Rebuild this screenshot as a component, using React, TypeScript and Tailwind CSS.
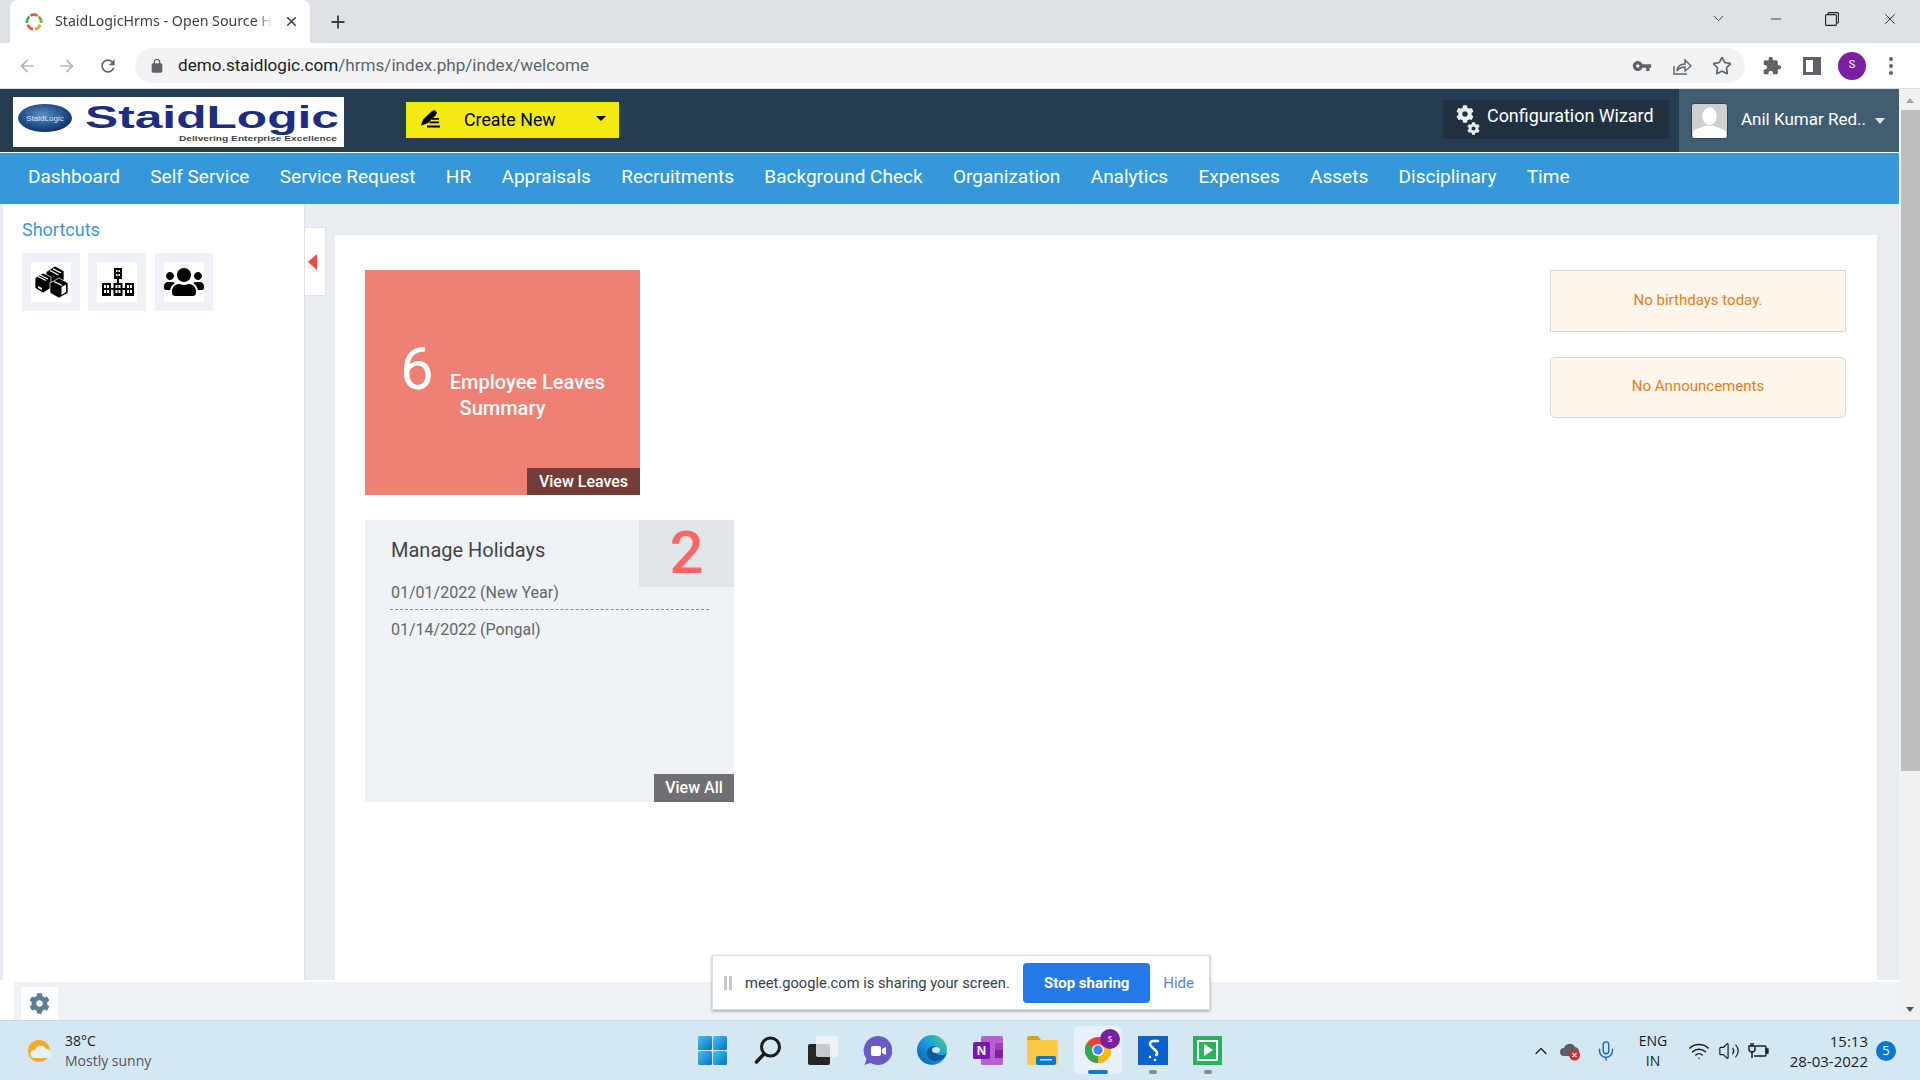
import { ChevronDown, ChevronUp, Mic, Minus, Plus, Star, Volume2, Wifi, X } from "lucide-react"
import { FaCog, FaUsers } from "react-icons/fa"

const navItems = [
  "Dashboard",
  "Self Service",
  "Service Request",
  "HR",
  "Appraisals",
  "Recruitments",
  "Background Check",
  "Organization",
  "Analytics",
  "Expenses",
  "Assets",
  "Disciplinary",
  "Time",
]

const MaterialIcon = ({ d, className }: { d: string; className: string }) => (
  <svg viewBox="0 0 24 24" fill="currentColor" className={className}>
    <path d={d} />
  </svg>
)

const TabStrip = () => (
  <div className="h-[43px] shrink-0 bg-[#dee1e6] flex items-end text-[#3c4043]">
    <div className="ml-[10px] w-[300px] h-[43px] bg-white rounded-t-lg flex items-center pl-[15px]">
      <svg viewBox="0 0 20 20" className="w-[18px] h-[18px] shrink-0" fill="none" strokeWidth="3">
        <path d="M6 3 A8 8 0 0 1 14 3" stroke="#e5574a" />
        <path d="M15 4 A8 8 0 0 1 18 11" stroke="#7cb342" />
        <path d="M17 13 A8 8 0 0 1 11 18" stroke="#e8a33a" />
        <path d="M9 18 A8 8 0 0 1 3 13" stroke="#e5574a" />
        <path d="M2 11 A8 8 0 0 1 5 4" stroke="#4caf50" />
      </svg>
      <div className="ml-[12px] mb-[2px] w-[217px] overflow-hidden whitespace-nowrap text-[14.2px] font-['Noto_Sans',sans-serif] [mask-image:linear-gradient(to_right,black_93%,transparent)]">
        StaidLogicHrms - Open Source H
      </div>
      <X className="ml-[12px] w-[15px] h-[15px] text-[#3c4043]" strokeWidth={2.5} />
    </div>
    <Plus className="ml-[18px] mb-[11px] w-[20px] h-[20px] text-[#3c4043]" strokeWidth={2.2} />
    <div className="ml-auto h-full flex items-center pb-[6px] text-[#222]">
      <ChevronDown className="w-[17px] h-[17px]" strokeWidth={1.2} />
      <Minus className="ml-[41px] w-[16px] h-[16px]" strokeWidth={1.2} />
      <svg viewBox="0 0 14 14" className="ml-[41px] w-[14px] h-[14px]" fill="none" stroke="currentColor" strokeWidth="1.1">
        <rect x="0.6" y="2.6" width="10.8" height="10.8" rx="1" />
        <path d="M3 2.5V1.5A1 1 0 0 1 4 .6H12.4A1 1 0 0 1 13.4 1.6V10A1 1 0 0 1 12.4 11H11.5" />
      </svg>
      <X className="ml-[42px] mr-[21px] w-[18px] h-[18px]" strokeWidth={1.2} />
    </div>
  </div>
)

const Toolbar = () => (
  <div className="h-[46px] shrink-0 bg-white border-b border-[#dadce0] flex items-start pt-[5px]">
    <div className="flex items-center h-[35px] text-[#b4b7bb]">
      <MaterialIcon className="ml-[17px] w-[20px] h-[20px]" d="M20 11H7.83l5.59-5.59L12 4l-8 8 8 8 1.41-1.41L7.83 13H20v-2z" />
      <MaterialIcon className="ml-[20px] w-[20px] h-[20px]" d="M4 11h12.17l-5.59-5.59L12 4l8 8-8 8-1.41-1.41L16.17 13H4v-2z" />
      <MaterialIcon className="ml-[21px] w-[20px] h-[20px] text-[#5f6368]" d="M17.65 6.35C16.2 4.9 14.21 4 12 4c-4.42 0-7.99 3.58-7.99 8s3.57 8 7.99 8c3.73 0 6.84-2.55 7.73-6h-2.08c-.82 2.33-3.04 4-5.65 4-3.31 0-6-2.69-6-6s2.69-6 6-6c1.66 0 3.14.69 4.22 1.78L13 11h7V4l-2.35 2.35z" />
    </div>
    <div className="ml-[17px] w-[1610px] h-[35px] bg-[#f1f3f4] rounded-full flex items-center">
      <MaterialIcon className="ml-[14px] w-[16px] h-[16px] text-[#5f6368]" d="M18 8h-1V6c0-2.76-2.24-5-5-5S7 3.24 7 6v2H6c-1.1 0-2 .9-2 2v10c0 1.1.9 2 2 2h12c1.1 0 2-.9 2-2V10c0-1.1-.9-2-2-2zM9 6c0-1.66 1.34-3 3-3s3 1.34 3 3v2H9V6z" />
      <div className="ml-[13px] text-[17.1px] text-[#202124] font-['Roboto',sans-serif] whitespace-nowrap">
        demo.staidlogic.com<span className="text-[#5f6368]">/hrms/index.php/index/welcome</span>
      </div>
      <div className="ml-auto flex items-center text-[#5f6368] pr-[13px]">
        <MaterialIcon className="w-[20px] h-[20px]" d="M12.65 10C11.83 7.67 9.61 6 7 6c-3.31 0-6 2.69-6 6s2.69 6 6 6c2.61 0 4.83-1.67 5.65-4H17v4h4v-4h2v-4H12.65zM7 14c-1.1 0-2-.9-2-2s.9-2 2-2 2 .9 2 2-.9 2-2 2z" />
        <svg viewBox="0 0 20 20" className="ml-[20px] w-[20px] h-[20px]" fill="none" stroke="currentColor" strokeWidth="1.4">
          <path d="M2 10v8h13" />
          <path d="M5 15c.5-5 4-7 8-7V4l6 6-6 5v-4c-3.500 0-6 1-8 4z" />
        </svg>
        <Star className="ml-[20px] w-[20px] h-[20px]" strokeWidth={2} />
      </div>
    </div>
    <div className="h-[35px] flex items-center text-[#5f6368]">
      <MaterialIcon className="ml-[17px] w-[20px] h-[20px]" d="M20.5 11H19V7c0-1.100-.9-2-2-2h-4V3.500C13 2.120 11.880 1 10.500 1S8 2.120 8 3.500V5H4c-1.100 0-1.990.9-1.990 2v3.800H3.500c1.490 0 2.700 1.210 2.700 2.700s-1.210 2.700-2.700 2.700H2V20c0 1.100.9 2 2 2h3.800v-1.500c0-1.490 1.210-2.700 2.700-2.700 1.490 0 2.700 1.210 2.700 2.700V22H17c1.100 0 2-.9 2-2v-4h1.500c1.380 0 2.500-1.120 2.500-2.500S21.880 11 20.500 11z" />
      <div className="ml-[21px] w-[18px] h-[18px] border-[3px] border-[#5f6368] border-r-[8px]" />
      <div className="ml-[17px] w-[28px] h-[28px] rounded-full bg-[#7b1fa2] text-white text-[11px] flex items-center justify-center font-['Roboto',sans-serif]">
        S
      </div>
      <div className="ml-[23px] flex flex-col gap-[3px]">
        <div className="w-[4px] h-[4px] rounded-full bg-[#5f6368]" />
        <div className="w-[4px] h-[4px] rounded-full bg-[#5f6368]" />
        <div className="w-[4px] h-[4px] rounded-full bg-[#5f6368]" />
      </div>
    </div>
  </div>
)

const Logo = () => (
  <svg viewBox="0 0 331 50" className="w-[331px] h-[50px] bg-white mt-[8px] ml-[13px] shrink-0">
    <defs>
      <radialGradient id="globe" cx="45%" cy="40%" r="65%">
        <stop offset="0%" stopColor="#5c8fc0" />
        <stop offset="60%" stopColor="#24528c" />
        <stop offset="100%" stopColor="#0f2c5c" />
      </radialGradient>
    </defs>
    <ellipse cx="32" cy="21" rx="27" ry="14" fill="url(#globe)" />
    <text x="32" y="24" textAnchor="middle" fontSize="8" fill="#dfe8f2" fontFamily="Liberation Sans">StaidLogic</text>
    <text x="72" y="31" fontSize="32" fontWeight="700" fill="#1f2d80" fontFamily="Liberation Sans" textLength="254" lengthAdjust="spacingAndGlyphs">StaidLogic</text>
    <text x="166" y="44" fontSize="7.500" fontWeight="700" fill="#444" fontFamily="Liberation Sans" textLength="158" lengthAdjust="spacingAndGlyphs">Delivering Enterprise Excellence</text>
  </svg>
)

const Header = () => (
  <div className="h-[64px] shrink-0 bg-[#263c50] border-b border-white flex items-start">
    <Logo />
    <div className="ml-[62px] mt-[13px] w-[213px] h-[36px] bg-[#f2ea10] flex items-center text-black text-[17.8px]">
      <svg viewBox="0 0 20 18" className="ml-[14px] mb-[2px] w-[20px] h-[18px]" fill="currentColor">
        <path d="M11.500 1.500l3-1.500 2.500 2.500-1 2.500-8 8-4 1.500-3 1 1-3 1.500-3.500z" />
        <path d="M12 8h7v1.800h-7zM9.500 11.500H19v1.800H9.500zM7 15.500h13v2H7z" />
      </svg>
      <span className="ml-[24px]">Create New</span>
      <div className="ml-auto mr-[13px] mb-[3px] w-0 h-0 border-x-[5px] border-x-transparent border-t-[5px] border-t-black" />
    </div>
    <div className="ml-auto mt-[11px] mr-[10px] w-[226px] h-[39px] bg-[#203242] flex items-center text-white text-[17.9px]">
      <div className="relative ml-[13px] w-[24px] h-[30px]">
        <FaCog className="absolute left-0 top-0 w-[18px] h-[18px] text-[#eceff1]" />
        <FaCog className="absolute right-0 bottom-0 w-[13px] h-[13px] text-[#eceff1]" />
      </div>
      <span className="ml-[7px] mb-[6px]">Configuration Wizard</span>
    </div>
    <div className="w-[220px] h-full bg-[#425c70] flex items-center text-white text-[17px]">
      <svg viewBox="0 0 37 36" className="ml-[12px] w-[37px] h-[36px] rounded-[3px] border border-[#2c4252] bg-[#cfcfcf]">
        <ellipse cx="18.500" cy="13" rx="7.500" ry="9.500" fill="#fff" />
        <path d="M1 36v-7c4-4 10-4 13-6h9c3 2 9 2 13 6v7z" fill="#fff" />
      </svg>
      <span className="ml-[13px] mb-[2px] whitespace-nowrap">Anil Kumar Red..</span>
      <div className="ml-auto mr-[14px] w-0 h-0 border-x-[5px] border-x-transparent border-t-[6px] border-t-[#e2e6e9]" />
    </div>
  </div>
)

const Nav = () => (
  <div className="h-[51px] shrink-0 bg-[#3498db] flex items-center gap-[30.4px] pl-[28px] pb-[3px] text-white text-[19px] whitespace-nowrap">
    {navItems.map((item) => (
      <span key={item}>{item}</span>
    ))}
  </div>
)

const ShortcutBox = ({ children }: { children: React.ReactNode }) => (
  <div className="w-[58px] h-[58px] p-[9px] bg-[#eff2f7]">
    <div className="w-full h-full bg-white flex items-center justify-center text-black">{children}</div>
  </div>
)

const Sidebar = () => (
  <div className="w-[302px] shrink-0 bg-white border-r border-[#dde1e6] pt-[15px] pl-[19px]">
    <div className="h-[22px] leading-[22px] text-[18px] text-[#3f97e0]">Shortcuts</div>
    <div className="mt-[12px] flex gap-[8px]">
      <ShortcutBox>
        <svg viewBox="0 0 33 32" className="w-[33px] h-[32px]">
          <g fill="#000" stroke="#fff" strokeWidth="0.7">
            <polygon points="11,6 20,0 29,5 29,14 20,19 11,14" />
            <polygon points="0,12 8,7 16,11 16,22 8,27 0,22" />
            <polygon points="15,17 24,12 33,17 33,27 24,32 15,27" />
          </g>
          <g stroke="#fff" strokeWidth="1.300" fill="none">
            <path d="M15 4.500L23.500 9M18 2.800L26 7" />
            <path d="M3 10.500L11 14.500M5 9L13 13" />
            <path d="M19 15.500L27 19.500" />
          </g>
          <polygon points="26.500,21 31,18.500 31,26 26.500,29" fill="#fff" />
          <polygon points="3,20 7,22 7,24 3,22" fill="#fff" />
        </svg>
      </ShortcutBox>
      <ShortcutBox>
        <svg viewBox="0 0 32 28" className="ml-px w-[32px] h-[28px]" fill="currentColor">
          <path fillRule="evenodd" d="M12 0h8v11h-8zM14 2v2h1.500V2zM16.500 2v2H18V2zM14 6v2h1.500V6zM16.500 6v2H18V6z" />
          <path d="M15 11h2v5h-2zM8 20h4v2H8zM20 20h4v2h-4z" />
          <path fillRule="evenodd" d="M0 15h9v13H0zM2 17v3h2v-3zM5 17v3h2v-3zM2 22v3h2v-3zM5 22v3h2v-3zM11.500 15h9v13h-9zM13.500 17v3h2v-3zM16.500 17v3h2v-3zM13.500 22v3h2v-3zM16.500 22v3h2v-3zM23 15h9v13h-9zM25 17v3h2v-3zM28 17v3h2v-3zM25 22v3h2v-3zM28 22v3h2v-3z" />
        </svg>
      </ShortcutBox>
      <div className="ml-px">
        <ShortcutBox>
          <FaUsers className="w-[40px] h-[40px]" />
        </ShortcutBox>
      </div>
    </div>
  </div>
)

const LeavesCard = () => (
  <div className="relative w-[275px] h-[225px] bg-[#f08074] text-white text-center pt-[86px] px-[10px]">
    <div className="text-[20px] leading-[26px] font-medium">
      <span className="text-[60px] leading-[26px] font-normal mr-[11px]">6</span> Employee Leaves Summary
    </div>
    <div className="absolute right-0 bottom-0 w-[113px] h-[27px] leading-[27px] bg-[#733e38] text-[16px] font-medium">
      View Leaves
    </div>
  </div>
)

const HolidaysCard = () => (
  <div className="relative w-[369px] h-[282px] bg-[#eff2f7] pt-[18px] px-[25px]">
    <div className="absolute right-0 top-0 w-[95px] h-[67px] bg-[#e2e5ea] text-center text-[60px] leading-[65px] text-[#ff6666] font-medium">
      2
    </div>
    <div className="pl-px h-[24px] leading-[24px] text-[20px] text-[#444]">Manage Holidays</div>
    <div className="mt-[19px] pl-px h-[29px] leading-[24px] text-[16px] text-[#666] border-b border-dashed border-[#888]">
      01/01/2022 (New Year)
    </div>
    <div className="mt-[8px] pl-px h-[24px] leading-[24px] text-[16px] text-[#666]">01/14/2022 (Pongal)</div>
    <div className="absolute right-0 bottom-0 w-[80px] h-[28px] leading-[28px] text-center bg-[#6f7073] text-white text-[16px] font-medium">
      View All
    </div>
  </div>
)

const Body = () => (
  <div className="flex-1 min-h-0 flex bg-[#e9edf1] pl-[3px]">
    <Sidebar />
    <div className="w-[30px] shrink-0">
      <div className="mt-[23px] w-[21px] h-[69px] bg-white border-y border-r border-[#dfe3e8] flex items-center pl-[3px]">
        <div className="w-0 h-0 border-y-[8px] border-y-transparent border-r-[9px] border-r-[#ef4d3c]" />
      </div>
    </div>
    <div className="flex-1 mt-[31px] mr-[22px] bg-white flex justify-between items-start pl-[30px] pr-[31px] pt-[35px]">
      <div className="flex flex-col gap-[25px] items-start">
        <LeavesCard />
        <HolidaysCard />
      </div>
      <div className="w-[296px] flex flex-col gap-[25px] text-[15px] text-[#e58022] text-center">
        <div className="h-[62px] bg-[#fff6ee] border border-[#d9d5d2] pt-[18px]">No birthdays today.</div>
        <div className="h-[61px] bg-[#fff6ee] border border-[#d9d5d2] rounded-[5px] pt-[17px]">No Announcements</div>
      </div>
    </div>
  </div>
)

const BottomBar = () => (
  <div className="h-[40px] shrink-0 bg-white pl-[3px] pt-[2px] flex">
    <div className="w-[11px]" />
    <div className="flex-1 bg-[#eff2f6] pl-[7px] pt-[5px]">
      <div className="w-[37px] h-[33px] bg-white flex items-center justify-center">
        <FaCog className="w-[21px] h-[21px] text-[#5f7d93]" />
      </div>
    </div>
  </div>
)

const Scrollbar = () => (
  <div className="w-[21px] shrink-0 bg-[#f1f1f1] flex flex-col items-end">
    <div className="mt-[9px] mr-[6px] w-0 h-0 border-x-[4px] border-x-transparent border-b-[5px] border-b-[#a3a3a3]" />
    <div className="mt-[7px] w-[19px] h-[661px] bg-[#bebebe]" />
    <div className="mt-auto mb-[8px] mr-[6px] w-0 h-0 border-x-[4px] border-x-transparent border-t-[5px] border-t-[#505050]" />
  </div>
)

const MeetBar = () => (
  <div className="absolute left-[712px] top-[955px] w-[498px] h-[55px] bg-white border border-[#dcdcdc] shadow-[0_1px_3px_rgba(0,0,0,0.35)] flex items-center">
    <div className="ml-[11px] flex gap-[2px]">
      <div className="w-[3px] h-[14px] bg-[#c8c8c8]" />
      <div className="w-[3px] h-[14px] bg-[#c8c8c8]" />
    </div>
    <span className="ml-[13px] pt-px text-[14.700px] text-[#3c4043] whitespace-nowrap">meet.google.com is sharing your screen.</span>
    <div className="ml-auto w-[127px] h-[40px] rounded-[4px] bg-[#2579e8] text-white text-[15px] font-bold flex items-center justify-center pt-px">
      Stop sharing
    </div>
    <span className="ml-[13px] mr-[15px] pt-px text-[15px] text-[#5f86e6]">Hide</span>
  </div>
)

const Taskbar = () => (
  <div className="h-[60px] shrink-0 bg-[#d3e8f2] border-t border-[#c5d9e4] flex items-center relative font-['Open_Sans',sans-serif] text-[#1c1c1c]">
    <svg viewBox="0 0 26 24" className="ml-[28px] w-[26px] h-[24px] shrink-0">
      <circle cx="11" cy="12" r="11" fill="#f9a825" />
      <path d="M6 19a4 4 0 0 1 1-8 6 6 0 0 1 11-1 5 5 0 0 1 3 9z" fill="#e8f1f8" />
    </svg>
    <div className="ml-[11px] text-[14px] leading-[20px]">
      <div>38°C</div>
      <div className="text-[#555]">Mostly sunny</div>
    </div>

    <div className="absolute left-[698px] top-[5px] flex items-center">
      <svg viewBox="0 0 29 29" className="w-[29px] h-[29px]">
        <defs>
          <linearGradient id="win" x1="0" y1="0" x2="1" y2="1">
            <stop offset="0%" stopColor="#3fc4f6" />
            <stop offset="100%" stopColor="#0a6fc2" />
          </linearGradient>
        </defs>
        <rect x="0" y="0" width="14" height="14" rx="1.500" fill="url(#win)" />
        <rect x="15" y="0" width="14" height="14" rx="1.500" fill="url(#win)" />
        <rect x="0" y="15" width="14" height="14" rx="1.500" fill="url(#win)" />
        <rect x="15" y="15" width="14" height="14" rx="1.500" fill="url(#win)" />
      </svg>
      <svg viewBox="0 0 28 28" className="ml-[27px] w-[28px] h-[28px]" fill="none" stroke="#1c1c1c">
        <circle cx="16.500" cy="11" r="9" strokeWidth="3" />
        <path d="M10 18L2.500 26" strokeWidth="3.500" strokeLinecap="round" />
      </svg>
      <svg viewBox="0 0 30 29" className="ml-[26px] w-[30px] h-[29px]">
        <rect x="0" y="8" width="22" height="21" rx="2" fill="#262626" />
        <rect x="8" y="0" width="22" height="21" rx="2" fill="#f2f4f5" fillOpacity="0.8" />
      </svg>
      <svg viewBox="0 0 29 29" className="ml-[25px] w-[29px] h-[29px]">
        <path d="M14.500 0a14.500 14.500 0 1 1-7 27l-6 2 2-6A14.500 14.500 0 0 1 14.500 0z" fill="#6a5bc4" />
        <rect x="8" y="10" width="10" height="10" rx="2" fill="#fff" />
        <path d="M19 13l4-2v8l-4-2z" fill="#fff" />
      </svg>
      <svg viewBox="0 0 30 30" className="ml-[25px] w-[30px] h-[30px]">
        <defs>
          <linearGradient id="edge" x1="0" y1="1" x2="1" y2="0">
            <stop offset="0%" stopColor="#0c59a4" />
            <stop offset="55%" stopColor="#1b9de2" />
            <stop offset="100%" stopColor="#50d56a" />
          </linearGradient>
        </defs>
        <circle cx="15" cy="15" r="15" fill="url(#edge)" />
        <path d="M30 18c-2 2-7 3-10 1-3-2-3-6 0-7-4-2-10 0-10 6 0 5 5 9 10 8 2 0 5-1 7-3z" fill="#0c59a4" />
        <ellipse cx="19" cy="15" rx="4" ry="3" fill="#d3e8f2" />
      </svg>
      <svg viewBox="0 0 30 29" className="ml-[26px] w-[30px] h-[29px]">
        <rect x="8" y="0" width="22" height="29" rx="1.500" fill="#b95fd0" />
        <rect x="22" y="7" width="8" height="7" fill="#9c3fb8" />
        <rect x="22" y="14" width="8" height="8" fill="#7d1f9e" />
        <rect x="0" y="6" width="17" height="17" rx="1.500" fill="#7719aa" />
        <text x="8.500" y="19" fontSize="13" fontWeight="700" fill="#fff" textAnchor="middle" fontFamily="Liberation Sans">N</text>
      </svg>
      <svg viewBox="0 0 31 29" className="ml-[24px] w-[31px] h-[29px]">
        <path d="M0 2a2 2 0 0 1 2-2h9l3 4H0z" fill="#dba20f" />
        <rect x="0" y="4" width="31" height="25" rx="2" fill="#fbcb44" />
        <rect x="9" y="20" width="20" height="9" rx="2" fill="#0f78c7" />
        <rect x="13" y="23" width="12" height="1.500" fill="#bfe0f5" />
      </svg>
      <div className="relative ml-[16px] w-[48px] h-[48px] rounded-[5px] bg-[#e7f1f7] flex items-center justify-center">
        <svg viewBox="0 0 26 26" className="w-[26px] h-[26px]">
          <circle cx="13" cy="13" r="13" fill="#ea4335" />
          <path d="M13 13L24.300 6.500A13 13 0 0 1 13 26z" fill="#fbbc05" />
          <path d="M13 13L13 26A13 13 0 0 1 1.700 6.500z" fill="#34a853" />
          <circle cx="13" cy="13" r="6" fill="#fff" />
          <circle cx="13" cy="13" r="4.700" fill="#4285f4" />
        </svg>
        <div className="absolute right-[2px] top-[3px] w-[20px] h-[20px] rounded-full bg-[#7b1fa2] text-[#d9b6e6] text-[9px] font-bold flex items-center justify-center">
          S
        </div>
        <div className="absolute left-[14px] bottom-0 w-[20px] h-[4px] rounded-full bg-[#0f78d4]" />
      </div>
      <div className="relative ml-[16px] w-[30px] h-[29px] bg-[#0a62d0] flex items-center justify-center">
        <svg viewBox="0 0 18 24" className="w-[18px] h-[24px]" fill="none" stroke="#fff" strokeWidth="2.500" strokeLinecap="round">
          <path d="M14 3H9a3 3 0 0 0-3 3c0 2 2 3 3 4" />
          <path d="M10 11c1 1 3 2 3 4 0 1-.5 2-1 2" />
          <path d="M6 19h0M11 22h0" />
        </svg>
        <div className="absolute left-[11px] top-[34px] w-[8px] h-[4px] rounded-full bg-[#7f8c94]" />
      </div>
      <div className="relative ml-[25px] w-[29px] h-[29px] bg-[#27b35b] flex items-center justify-center">
        <div className="w-[21px] h-[21px] border-2 border-white flex items-center justify-center">
          <div className="ml-[2px] w-0 h-0 border-y-[6px] border-y-transparent border-l-[9px] border-l-white" />
        </div>
        <div className="absolute left-[11px] top-[34px] w-[8px] h-[4px] rounded-full bg-[#7f8c94]" />
      </div>
    </div>

    <div className="ml-auto flex items-center">
      <ChevronUp className="w-[20px] h-[20px]" strokeWidth={1.5} />
      <svg viewBox="0 0 22 20" className="ml-[8px] w-[22px] h-[20px]">
        <path d="M5 15a4 4 0 0 1 0-8 6 6 0 0 1 11-1 5 5 0 0 1 2 9z" fill="#5a5f63" />
        <circle cx="15.500" cy="14" r="5.500" fill="#d9263a" />
        <path d="M13.500 12l4 4M17.500 12l-4 4" stroke="#fff" strokeWidth="1.300" />
      </svg>
      <Mic className="ml-[14px] w-[22px] h-[22px] text-[#1f5fbf]" strokeWidth={1.5} />
      <div className="ml-[20px] w-[32px] text-center text-[14px] leading-[20px]">
        <div>ENG</div>
        <div>IN</div>
      </div>
      <Wifi className="ml-[19px] w-[22px] h-[22px]" strokeWidth={1.6} />
      <Volume2 className="ml-[8px] w-[22px] h-[22px]" strokeWidth={1.3} />
      <svg viewBox="0 0 22 18" className="ml-[8px] w-[22px] h-[18px]" fill="none" stroke="#1c1c1c" strokeWidth="1.300">
        <path d="M8 4h9a1 1 0 0 1 1 1v8a1 1 0 0 1-1 1H6" />
        <path d="M18 7h2v4h-2z" fill="#1c1c1c" />
        <path d="M1 4h6v3a3 3 0 0 1-6 0zM3 1v3M5 1v3M4 10v6" strokeWidth="1.500" />
      </svg>
      <div className="ml-[18px] w-[80px] text-right text-[15px] leading-[20px]">
        <div>15:13</div>
        <div>28-03-2022</div>
      </div>
      <div className="ml-[8px] mr-[24px] w-[20px] h-[20px] rounded-full bg-[#0b78d0] text-white text-[13px] flex items-center justify-center">
        5
      </div>
    </div>
  </div>
)

export default function App() {
  return (
    <div className="relative w-[1920px] h-[1080px] overflow-hidden flex flex-col bg-white font-['Roboto',sans-serif]">
      <TabStrip />
      <Toolbar />
      <div className="flex-1 min-h-0 flex">
        <div className="flex-1 min-w-0 flex flex-col">
          <Header />
          <Nav />
          <Body />
          <BottomBar />
        </div>
        <Scrollbar />
      </div>
      <Taskbar />
      <MeetBar />
    </div>
  )
}
